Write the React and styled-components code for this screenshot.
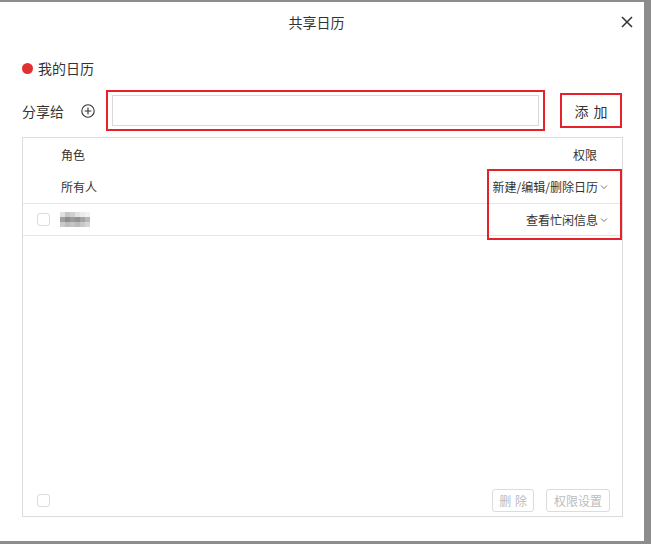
import React from 'react'
import styled, { createGlobalStyle } from 'styled-components'

const GlobalStyle = createGlobalStyle`
  html, body { margin: 0; padding: 0; }
  body {
    font-family: "Noto Sans CJK SC", "Noto Sans", "Liberation Sans", sans-serif;
    color: #333;
  }
`

const Backdrop = styled.div`
  width: 651px;
  height: 544px;
  box-sizing: border-box;
  padding: 2px 7px 3px 0;
  background: #8c8c8c;
`

const Dialog = styled.div`
  width: 644px;
  height: 539px;
  background: #fff;
  display: flex;
  flex-direction: column;
`

const Header = styled.div`
  height: 40px;
  display: grid;
  grid-template-columns: 1fr auto 1fr;
  align-items: center;
  padding-right: 11px;
`

const Title = styled.div`
  grid-column: 2;
  font-size: 14px;
  color: #333;
`

const CloseBtn = styled.div`
  grid-column: 3;
  justify-self: end;
  display: flex;
  cursor: pointer;
`

const Body = styled.div`
  flex: 1;
  display: flex;
  flex-direction: column;
  padding: 0 21px 24px 22px;
  min-height: 0;
`

const CalRow = styled.div`
  margin-top: 16px;
  height: 20px;
  display: flex;
  align-items: center;
  gap: 5px;
  font-size: 14px;
`

const Dot = styled.span`
  width: 11px;
  height: 11px;
  border-radius: 50%;
  background: ${p => p.color};
`

const ShareRow = styled.div`
  margin-top: 12px;
  height: 41px;
  display: flex;
  align-items: center;
`

const Label = styled.span`
  font-size: 14px;
  width: 59px;
`

const PlusIcon = styled.span`
  display: flex;
  margin-right: 11px;
`

const Annot = styled.div`
  border: 2px solid #e5212b;
  box-sizing: border-box;
`

const InputWrap = styled(Annot)`
  width: 439px;
  height: 41px;
  padding: 3px 4px;
`

const Input = styled.input`
  width: 100%;
  height: 100%;
  box-sizing: border-box;
  border: 1px solid #d9d9d9;
  outline: none;
  font: inherit;
  font-size: 13px;
`

const AddBtn = styled(Annot)`
  margin-left: 15px;
  width: 62px;
  height: 35px;
  display: flex;
  align-items: center;
  justify-content: center;
  font-size: 14px;
  color: #333;
  word-spacing: 2px;
  cursor: pointer;
`

const Table = styled.div`
  position: relative;
  margin-top: 6px;
  flex: 1;
  border: 1px solid #dcdcdc;
  display: flex;
  flex-direction: column;
  font-size: 12px;
`

const Row = styled.div`
  height: ${p => p.h}px;
  display: flex;
  align-items: center;
  padding-left: ${p => p.left}px;
  padding-right: ${p => p.right}px;
  border-bottom: ${p => (p.line ? '1px solid #e6e6e6' : 'none')};
`

const Role = styled.span`
  flex: 1;
  display: flex;
  align-items: center;
  gap: 10px;
`

const Perm = styled.span`
  display: flex;
  align-items: center;
  gap: 2px;
  cursor: pointer;
`

const Check = styled.span`
  width: 13px;
  height: 13px;
  box-sizing: border-box;
  border: 1px solid #dcdcdc;
  border-radius: 3px;
`

const Spacer = styled.div`
  flex: 1;
`

const Footer = styled.div`
  height: 32px;
  display: flex;
  align-items: center;
  padding: 0 12px 0 14px;
`

const FootBtn = styled.span`
  margin-left: ${p => p.gap || 0}px;
  height: 21px;
  padding: 0 ${p => p.pad}px;
  display: flex;
  align-items: center;
  border: 1px solid #dcdcdc;
  border-radius: 3px;
  color: #bcbcbc;
  font-size: 12px;
  word-spacing: ${p => p.ws || 0}px;
`

const PermAnnot = styled(Annot)`
  position: absolute;
  top: 31px;
  right: 0;
  width: 135px;
  height: 71px;
  pointer-events: none;
`

const Chevron = () => (
  <svg width="8" height="6" viewBox="0 0 8 6">
    <path d="M1 1.5 L4 4.5 L7 1.5" fill="none" stroke="#777" strokeWidth="1" />
  </svg>
)

const mosaic = [
  ['#e0e0e0', '#c6c6c6', '#d0d0d0', '#e2e2e2', '#ececec', '#f2f2f2'],
  ['#a0a0a0', '#8e8e8e', '#9a9a9a', '#929292', '#a4a4a4', '#b8b8b8'],
  ['#cacaca', '#bcbcbc', '#c4c4c4', '#bababa', '#c8c8c8', '#d6d6d6'],
]

const Blurred = () => (
  <svg width="30" height="15" viewBox="0 0 30 15">
    {mosaic.map((r, y) =>
      r.map((c, x) => <rect key={x + '-' + y} x={x * 5} y={y * 5} width="5" height="5" fill={c} />)
    )}
  </svg>
)

export default function App() {
  return (
    <Backdrop>
      <GlobalStyle />
      <Dialog>
        <Header>
          <Title>共享日历</Title>
          <CloseBtn>
            <svg width="12" height="12" viewBox="0 0 12 12">
              <path d="M1 1 L11 11 M11 1 L1 11" stroke="#333" strokeWidth="1.5" />
            </svg>
          </CloseBtn>
        </Header>
        <Body>
          <CalRow>
            <Dot color="#e03131" />
            <span>我的日历</span>
          </CalRow>
          <ShareRow>
            <Label>分享给</Label>
            <PlusIcon>
              <svg width="14" height="14" viewBox="0 0 14 14">
                <circle cx="7" cy="7" r="6.2" fill="none" stroke="#333" strokeWidth="1.1" />
                <path d="M7 3.6 V10.4 M3.6 7 H10.4" stroke="#333" strokeWidth="1.1" />
              </svg>
            </PlusIcon>
            <InputWrap>
              <Input />
            </InputWrap>
            <AddBtn>添 加</AddBtn>
          </ShareRow>
          <Table>
            <Row h={32} left={38} right={25}>
              <Role>角色</Role>
              <Perm>权限</Perm>
            </Row>
            <Row h={33} left={38} right={14} line>
              <Role>所有人</Role>
              <Perm>新建/编辑/删除日历<Chevron /></Perm>
            </Row>
            <Row h={31} left={14} right={14} line>
              <Role><Check /><Blurred /></Role>
              <Perm>查看忙闲信息<Chevron /></Perm>
            </Row>
            <Spacer />
            <Footer>
              <Check />
              <Spacer />
              <FootBtn pad={6} ws={1}>删 除</FootBtn>
              <FootBtn gap={12} pad={7}>权限设置</FootBtn>
            </Footer>
            <PermAnnot />
          </Table>
        </Body>
      </Dialog>
    </Backdrop>
  )
}
